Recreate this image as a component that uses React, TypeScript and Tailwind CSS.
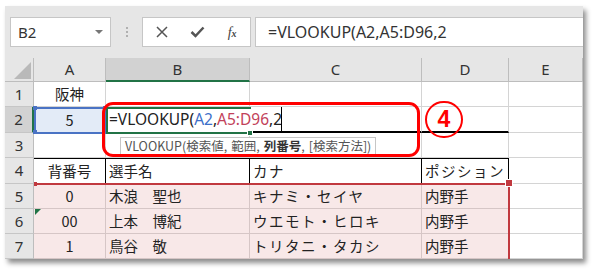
import React from "react";

const FONT = { fontFamily: '"Noto Sans", "Noto Sans CJK JP", sans-serif' };
const JP = { fontFamily: '"Noto Sans CJK JP", "Noto Sans", sans-serif' };

type CellDef = { text?: string; align?: "center" | "left"; cls?: string };

const pink = "bg-[#f8e8e8] border-b-[#d6c6c6]";

const rows: { h: string; cells: CellDef[]; sel?: boolean }[] = [
  { h: "h-[25px]", cells: [{ text: "阪神", align: "center" }, {}, {}, {}, {}] },
  {
    h: "h-[26px]",
    sel: true,
    cells: [
      { text: "5", align: "center", cls: "bg-[#e3ebf7]" },
      { cls: "border-r-transparent" },
      { cls: "border-b-2 border-b-black" },
      { cls: "border-b-2 border-b-black" },
      {},
    ],
  },
  { h: "h-[25px]", cells: [{}, {}, {}, {}, {}] },
  {
    h: "h-[26px]",
    cells: [
      { text: "背番号", align: "center", cls: "border-t border-t-black border-r-black" },
      { text: "選手名", cls: "border-t border-t-black border-r-black" },
      { text: "カナ", cls: "border-t border-t-black border-r-black tracking-[1.5px]" },
      { text: "ポジション", cls: "border-t border-t-black border-r-black tracking-[1.5px]" },
      {},
    ],
  },
  {
    h: "h-[25px]",
    cells: [
      { text: "0", align: "center", cls: `${pink} border-r-[#d6c6c6]` },
      { text: "木浪　聖也", cls: `${pink} border-r-[#d6c6c6]` },
      { text: "キナミ・セイヤ", cls: `${pink} border-r-[#d6c6c6] tracking-[1.5px]` },
      { text: "内野手", cls: pink },
      {},
    ],
  },
  {
    h: "h-[25px]",
    cells: [
      { text: "00", align: "center", cls: `${pink} border-r-[#d6c6c6]` },
      { text: "上本　博紀", cls: `${pink} border-r-[#d6c6c6]` },
      { text: "ウエモト・ヒロキ", cls: `${pink} border-r-[#d6c6c6] tracking-[1.5px]` },
      { text: "内野手", cls: pink },
      {},
    ],
  },
  {
    h: "h-[25px]",
    cells: [
      { text: "1", align: "center", cls: `${pink} border-r-[#d6c6c6]` },
      { text: "鳥谷　敬", cls: `${pink} border-r-[#d6c6c6]` },
      { text: "トリタニ・タカシ", cls: `${pink} border-r-[#d6c6c6] tracking-[1.5px]` },
      { text: "内野手", cls: pink },
      {},
    ],
  },
];

const colW = ["w-[72px]", "w-[144px]", "w-[172px]", "w-[87px]", "w-[74px]"];

export default function App() {
  return (
    <div className="w-[594px] h-[271px] bg-white pl-[5px] pt-[6px]" style={FONT}>
      <div className="w-[578px] h-[253px] bg-white shadow-[3px_4px_5px_rgba(0,0,0,0.45)] flex flex-col">
        {/* Formula bar */}
        <div className="h-[52px] bg-[#e6e6e6] flex items-start pt-[11px] pl-[5px]">
          <div className="w-[101px] h-[30px] bg-white border border-[#c6c6c6] flex items-center justify-between pl-[7px] pr-[7px]">
            <span className="text-[15px] text-[#333]">B2</span>
            <span className="w-0 h-0 border-l-[4px] border-r-[4px] border-t-[4px] border-l-transparent border-r-transparent border-t-[#777]" />
          </div>
          <div className="w-[31px] h-[30px] flex flex-col items-center justify-center gap-[2px]">
            <span className="w-[2px] h-[2px] bg-[#b0b0b0]" />
            <span className="w-[2px] h-[2px] bg-[#b0b0b0]" />
            <span className="w-[2px] h-[2px] bg-[#b0b0b0]" />
          </div>
          <div className="w-[109px] h-[30px] bg-white border border-[#c6c6c6] flex items-center">
            <div className="w-[38px] flex justify-center">
              <svg width="12" height="12" viewBox="0 0 12 12">
                <path d="M1 1L11 11M11 1L1 11" stroke="#555" strokeWidth="1.5" fill="none" />
              </svg>
            </div>
            <div className="w-[34px] flex justify-center">
              <svg width="15" height="12" viewBox="0 0 15 12">
                <path d="M1.5 6L5.5 10L13.5 1.5" stroke="#555" strokeWidth="2.5" fill="none" />
              </svg>
            </div>
            <div className="w-[36px] flex justify-center">
              <span className="text-[14px] italic text-[#444]" style={{ fontFamily: '"Liberation Serif", serif' }}>
                f<span className="text-[10px] font-bold">x</span>
              </span>
            </div>
          </div>
          <div className="ml-[4px] flex-1 h-[30px] bg-white border border-[#c6c6c6] border-r-0 flex items-center pl-[12px]">
            <span className="text-[16px] text-[#333]">=VLOOKUP(A2,A5:D96,2</span>
          </div>
        </div>

        {/* Sheet grid */}
        <div className="relative flex-1">
          {/* Column headers */}
          <div className="flex h-[24px]">
            <div className="w-[29px] h-full bg-[#e6e6e6] border-r border-b border-[#bdbdbd] relative">
              <svg className="absolute left-[9px] top-[4px]" width="17" height="17" viewBox="0 0 17 17">
                <path d="M17 0L17 17L0 17Z" fill="#b9b9b9" />
              </svg>
            </div>
            {["A", "B", "C", "D", "E"].map((c, i) => (
              <div
                key={c}
                className={`${colW[i]} h-full flex items-center justify-center text-[15px] text-[#333] border-r border-[#bdbdbd] ${
                  c === "B" ? "bg-[#d2d2d2] border-b-2 border-b-[#217346]" : "bg-[#e6e6e6] border-b border-b-[#bdbdbd]"
                }`}
              >
                {c}
              </div>
            ))}
          </div>

          {rows.map((r, ri) => (
            <div key={ri} className={`flex ${r.h}`}>
              <div
                className={`w-[29px] h-full flex items-center justify-center text-[15px] text-[#333] border-b border-[#c6c6c6] ${
                  r.sel ? "bg-[#d2d2d2] border-r-2 border-r-[#217346]" : "bg-[#e6e6e6] border-r border-r-[#bdbdbd]"
                }`}
              >
                {ri + 1}
              </div>
              {r.cells.map((c, ci) => (
                <div
                  key={ci}
                  className={`${colW[ci]} h-full flex items-center border-r border-b border-[#d4d4d4] text-[14.5px] text-[#222] overflow-hidden whitespace-nowrap ${
                    c.align === "center" ? "justify-center" : "pl-[3px]"
                  } ${c.cls ?? ""}`}
                  style={JP}
                >
                  {c.text}
                </div>
              ))}
            </div>
          ))}

          {/* A2 reference (blue) */}
          <div className="absolute left-[29px] top-[49px] w-[73px] h-[27px] border-2 border-[#4a73c4]" />
          <div className="absolute left-[28px] top-[48px] w-[4px] h-[4px] bg-[#4a73c4]" />
          <div className="absolute left-[98px] top-[48px] w-[4px] h-[4px] bg-[#4a73c4]" />
          <div className="absolute left-[28px] top-[72px] w-[4px] h-[4px] bg-[#4a73c4]" />
          <div className="absolute left-[98px] top-[72px] w-[4px] h-[4px] bg-[#4a73c4]" />

          {/* B2 active editor (green) */}
          <div className="absolute left-[101px] top-[49px] w-[145px] h-[27px] border-2 border-r-0 border-[#217346]" />
          <div className="absolute left-[242px] top-[72px] w-[6px] h-[6px] bg-[#217346] border border-white" />
          <div className="absolute left-[104px] top-[49px] h-[26px] flex items-center text-[15.5px] text-[#222] whitespace-nowrap" style={FONT}>
            =VLOOKUP(<span className="text-[#3c6fc9]">A2</span>,<span className="text-[#c2415a]">A5:D96</span>,2
          </div>
          <div className="absolute left-[276px] top-[49px] w-px h-[26px] bg-black" />

          {/* Tooltip */}
          <div
            className="absolute left-[115px] top-[79px] h-[18px] px-[4px] bg-white border border-[#c6c6c6] flex items-center text-[12.5px] text-[#555] whitespace-nowrap"
            style={JP}
          >
            VLOOKUP(検索値,<span className="ml-[4px]">範囲,</span>
            <b className="ml-[4px] font-bold text-[#333]">列番号</b>,<span className="ml-[4px]">[検索方法])</span>
          </div>

          {/* Referenced range A5:D7 (red) */}
          <div className="absolute left-[29px] top-[125px] w-[476px] h-[2px] bg-[#c1393f]" />
          <div className="absolute left-[503px] top-[125px] w-[2px] h-[76px] bg-[#c1393f]" />
          <div className="absolute left-[29px] top-[124px] w-[3px] h-[4px] bg-[#c1393f]" />
          <div className="absolute left-[501px] top-[122px] w-[6px] h-[6px] bg-[#c1393f] outline outline-1 outline-white" />

          {/* Error indicator A6 */}
          <svg className="absolute left-[30px] top-[151px]" width="6" height="6" viewBox="0 0 6 6">
            <path d="M0 0H6L0 6Z" fill="#217346" />
          </svg>

          {/* Annotation: rounded red box */}
          <div className="absolute left-[97px] top-[44px] w-[318px] h-[55px] border-[3px] border-[#ff0000] rounded-[11px]" />

          {/* Annotation: circled 4 */}
          <div className="absolute left-[420px] top-[43px] w-[38px] h-[37px] rounded-full border-[2.5px] border-[#ff0000] flex items-center justify-center">
            <span className="text-[23px] font-bold text-[#ff0000] leading-none" style={{ fontFamily: '"Liberation Sans", Arial, sans-serif' }}>
              4
            </span>
          </div>
        </div>
      </div>
    </div>
  );
}
